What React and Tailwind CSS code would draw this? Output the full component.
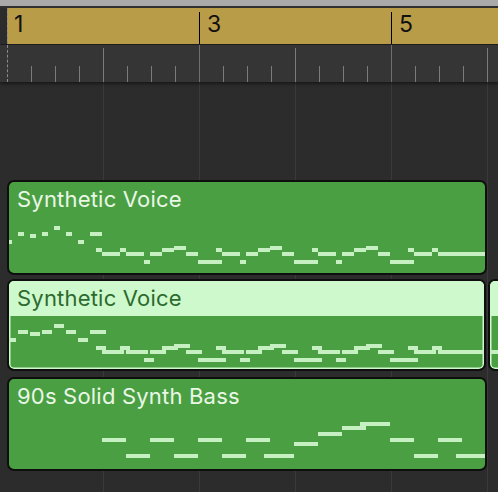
import React from 'react';

// note data: [startX, endX, y] in page px, converted per region
const voiceNotes = [
  [9, 12, 240], [18, 24, 232], [30, 36, 234], [42, 48, 232], [54, 60, 226], [66, 72, 232],
  [78, 84, 240], [90, 102, 232], [96, 102, 248], [102, 120, 252], [120, 126, 248], [126, 144, 252],
  [144, 150, 260], [150, 162, 252], [162, 174, 248], [174, 186, 246], [186, 198, 252], [198, 222, 260],
  [216, 222, 248], [222, 240, 252], [240, 246, 260], [246, 258, 252], [258, 270, 248], [270, 282, 246],
  [282, 294, 252], [294, 318, 260], [312, 318, 248], [318, 336, 252], [336, 342, 260], [342, 354, 252],
  [354, 366, 248], [366, 378, 246], [378, 390, 252], [390, 414, 260], [408, 414, 248], [414, 432, 252],
  [432, 438, 248], [438, 486, 252],
];

const bassNotes = [
  [102, 126, 438], [126, 150, 454], [150, 174, 438], [174, 198, 454], [198, 222, 438], [222, 246, 454],
  [246, 270, 438], [264, 294, 454], [294, 318, 442], [318, 342, 432], [342, 366, 426], [360, 390, 422],
  [390, 414, 438], [414, 438, 454], [438, 462, 438], [456, 486, 454],
];

function Notes({ notes, originY, extra = 0 }) {
  return notes.map(([a, b, y], i) => (
    <div
      key={i}
      className="absolute h-[4px] bg-[#c6efc2]"
      style={{ left: a - 9, top: y - originY, width: b - a + extra }}
    />
  ));
}

function Region({ title, notes, originY, selected, extra, className }) {
  return (
    <div
      className={`relative overflow-hidden rounded-[7px] border-2 border-[#0e0e0e] bg-[#4b9f43] ${
        selected ? 'shadow-[inset_0_0_0_1.5px_#cdf9cd]' : ''
      } ${className}`}
    >
      {selected ? (
        <div className="h-[35px] bg-[#cdf9cd] pl-[8px] pt-[6px] text-[22px] leading-[22px] tracking-[0.2px] text-[#2d6a2d]">
          {title}
        </div>
      ) : (
        <div className="pl-[8px] pt-[6px] text-[22px] leading-[22px] tracking-[0.2px] text-[#e9f7e6]">{title}</div>
      )}
      <Notes notes={notes} originY={originY} extra={extra} />
    </div>
  );
}

function Ticks() {
  const ticks = Array.from({ length: 21 }, (_, i) => i);
  return (
    <div className="flex h-[37px] items-end bg-[#353535] pl-[7px] shadow-[0_2px_3px_rgba(0,0,0,0.45)] relative z-10">
      {ticks.map((i) => {
        let cls = 'h-[16px] border-[#7b7b7b]';
        if (i === 0) cls = 'h-[37px] border-dashed border-[#8a8a8a]';
        else if (i % 8 === 0) cls = 'h-[37px] border-[#6f6f6f]';
        else if (i % 4 === 0) cls = 'h-[34px] border-[#7b7b7b]';
        return <div key={i} className={`w-[24px] shrink-0 border-l ${cls}`} />;
      })}
    </div>
  );
}

export default function App() {
  const gridCols = [0, 1, 2, 3, 4];
  const bars = ['1', '3', '5'];

  return (
    <div className="h-[492px] w-[498px] overflow-hidden bg-[#2c2c2c] font-['Inter',sans-serif]">
      <div className="h-[6px] bg-[#aaaaaa]" />
      <div className="h-[2px] bg-[#303030]" />

      {/* bar ruler */}
      <div className="flex h-[36px] pl-[7px]">
        {bars.map((b, i) => (
          <div
            key={b}
            className={`flex shrink-0 bg-[#b99c48] ${i === 2 ? 'w-[120px]' : 'w-[192px]'} ${
              i === 0 ? 'border-l border-dashed border-[#8a8a8a]' : ''
            }`}
          >
            {i > 0 && <div className="mt-[4px] w-px bg-black" />}
            <div className={`pt-[3px] text-[23px] leading-[26px] text-[#111] ${i === 0 ? 'pl-[6px]' : 'pl-[7px]'}`}>
              {b}
            </div>
          </div>
        ))}
      </div>
      <div className="h-px bg-[#1e1e1e]" />

      <Ticks />

      {/* tracks */}
      <div className="relative h-[410px]">
        <div className="absolute inset-0 flex pl-[103px]">
          {gridCols.map((c) => (
            <div key={c} className="w-[96px] shrink-0 border-l border-[#3a3a3a]" />
          ))}
        </div>
        <div className="relative flex flex-col pl-[7px] pt-[98px]">
          <Region title="Synthetic Voice" notes={voiceNotes} originY={182} className="h-[95px] w-[480px]" />
          <div className="mt-[4px] flex gap-[2px]">
            <Region
              title="Synthetic Voice"
              notes={voiceNotes}
              originY={183}
              extra={4}
              selected
              className="h-[92px] w-[479px] shrink-0"
            />
            <div className="relative h-[92px] w-[30px] shrink-0 overflow-hidden rounded-[7px] border-2 border-[#0e0e0e] bg-[#4b9f43] shadow-[inset_0_0_0_1.5px_#cdf9cd]">
              <div className="h-[35px] bg-[#cdf9cd]" />
              <div className="absolute left-0 top-[69px] h-[4px] w-[30px] bg-[#c6efc2]" />
            </div>
          </div>
          <Region title="90s Solid Synth Bass" notes={bassNotes} originY={379} className="mt-[6px] h-[94px] w-[480px]" />
        </div>
      </div>
    </div>
  );
}
